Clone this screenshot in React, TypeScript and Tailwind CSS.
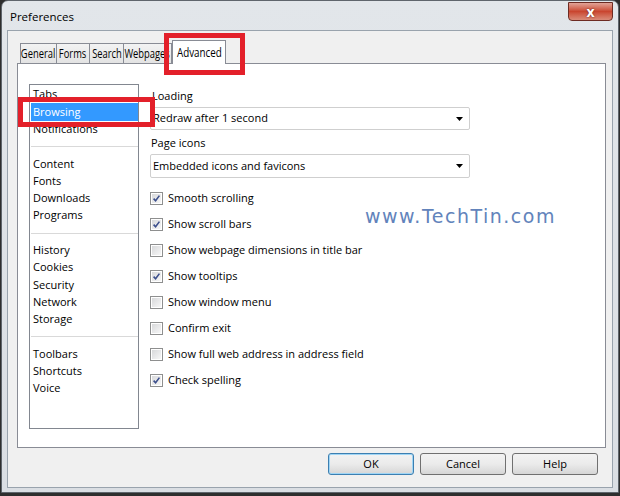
import React from "react";

const groups = [
  ["Tabs", "Browsing", "Notifications"],
  ["Content", "Fonts", "Downloads", "Programs"],
  ["History", "Cookies", "Security", "Network", "Storage"],
  ["Toolbars", "Shortcuts", "Voice"],
];

const options: [string, boolean][] = [
  ["Smooth scrolling", true],
  ["Show scroll bars", true],
  ["Show webpage dimensions in title bar", false],
  ["Show tooltips", true],
  ["Show window menu", false],
  ["Confirm exit", false],
  ["Show full web address in address field", false],
  ["Check spelling", true],
];

// tab label + width in px
const tabs: [string, string][] = [
  ["General", "w-[37px]"],
  ["Forms", "w-[34px]"],
  ["Search", "w-[35px]"],
  ["Webpages", "w-[49px]"],
];

function Checkbox({ checked }: { checked: boolean }) {
  return (
    <div className="w-[13px] h-[13px] border border-[#8e8f8f] bg-white p-[1px] shrink-0">
      <div className="w-full h-full bg-gradient-to-br from-[#d8d9db] to-[#f7f7f7] relative">
        {checked && (
          <svg viewBox="0 0 9 9" className="absolute inset-0 w-[9px] h-[9px]">
            <path d="M1.6 4.6 L3.6 6.8 L7.4 1.6" fill="none" stroke="#3c4f8c" strokeWidth="1.6" />
          </svg>
        )}
      </div>
    </div>
  );
}

function Select({ value, h }: { value: string; h: string }) {
  return (
    <div className={`w-[320px] ${h} border border-[#cfcfcf] rounded-[2px] bg-white flex items-center pl-[2px] pr-[6px]`}>
      <span className="flex-1">{value}</span>
      <svg viewBox="0 0 7 4" className="w-[7px] h-[4px]">
        <path d="M0 0 H7 L3.5 4 Z" fill="#000" />
      </svg>
    </div>
  );
}

export default function App() {
  return (
    <div className="w-[620px] h-[496px] bg-[#2e2e2e] relative overflow-hidden font-['Open_Sans',sans-serif] text-[11px] text-black">
      <div className="mx-[1px] h-[493px] rounded-t-[7px] border border-[#5f656c] bg-gradient-to-b from-[#e2e6ea] to-[#dadee3] flex flex-col">
        {/* title bar */}
        <div className="h-[29px] flex items-start justify-between pl-[8px] pr-[5px]">
          <span className="mt-[7px] text-[11.5px]">Preferences</span>
          <div className="w-[45px] h-[19px] mt-[1px] rounded-b-[4px] border border-[#6d2b22] bg-gradient-to-b from-[#e0a397] via-[#c9452f] to-[#d98b79] flex items-center justify-center">
            <span className="text-white font-bold text-[14px] leading-none [text-shadow:0_0_2px_#5a1a10]">x</span>
          </div>
        </div>

        {/* client */}
        <div className="mx-[5px] h-[458px] border border-[#99a3ad] bg-[#f0f0f0] pt-[9px] pl-[9px] pr-[6px]">
          <div className="h-[23px] flex items-end pl-[3px]">
            {tabs.map(([t, w]) => (
              <div
                key={t}
                className={`${w} h-[20px] -mr-px border border-b-0 border-[#898c95] bg-gradient-to-b from-[#f3f3f3] to-[#e3e3e3] flex items-center justify-center overflow-hidden`}
              >
                <span className="inline-block scale-x-[0.78] text-[12px] whitespace-nowrap">{t}</span>
              </div>
            ))}
            <div className="w-[54px] h-[24px] -mb-px ml-[1px] relative z-10 border border-b-0 border-[#898c95] bg-white flex items-center justify-center">
              <span className="inline-block scale-x-[0.82] text-[12px] whitespace-nowrap">Advanced</span>
            </div>
          </div>

          <div className="h-[385px] border border-[#898c95] bg-white flex pl-[11px] pt-[20px]">
            {/* category list */}
            <div className="w-[110px] h-[345px] border border-[#828790] pl-[1px] pr-0 pt-[1px]">
              {groups.map((g, gi) => (
                <div key={gi}>
                  {gi > 0 && (
                    <div className="h-[17.3px] flex items-center">
                      <div className="w-full h-px bg-[#d9d9d9]" />
                    </div>
                  )}
                  {g.map((item) => (
                    <div
                      key={item}
                      className={`h-[17.3px] pl-[2px] flex items-center ${
                        item === "Browsing" ? "bg-[#3399ff] text-white" : ""
                      }`}
                    >
                      {item}
                    </div>
                  ))}
                </div>
              ))}
            </div>

            {/* options */}
            <div className="ml-[11px] pt-[4px]">
              <div className="h-[17px] flex items-center pl-[2px]">Loading</div>
              <div className="mt-[2px]">
                <Select value="Redraw after 1 second" h="h-[23px]" />
              </div>
              <div className="mt-[5px] h-[17px] flex items-center pl-[1px]">Page icons</div>
              <div className="mt-[2px]">
                <Select value="Embedded icons and favicons" h="h-[24px]" />
              </div>
              <div className="mt-[7px]">
                {options.map(([label, on]) => (
                  <div key={label} className="h-[26px] flex items-center gap-[5px]">
                    <Checkbox checked={on} />
                    <span>{label}</span>
                  </div>
                ))}
              </div>
            </div>
          </div>

          {/* buttons */}
          <div className="mt-[5px] flex justify-end gap-[6px] pr-[8px]">
            {["OK", "Cancel", "Help"].map((b) => (
              <div
                key={b}
                className={`w-[86px] h-[22px] rounded-[3px] border flex items-center justify-center bg-gradient-to-b from-[#f2f2f2] via-[#ebebeb] to-[#d6d6d6] ${
                  b === "OK" ? "border-[#3c7fb1] shadow-[inset_0_0_0_1px_#9fd5f5]" : "border-[#707070]"
                }`}
              >
                {b}
              </div>
            ))}
          </div>
        </div>
      </div>

      {/* watermark */}
      <div className="absolute left-[365px] top-[202px] text-[19px] text-[#6283bb] font-['DejaVu_Sans',sans-serif] tracking-[1.5px]">
        www.TechTin.com
      </div>

      {/* highlight boxes */}
      <div className="absolute left-[164px] top-[33px] w-[81px] h-[42px] border-[5px] border-[#e3202a]" />
      <div className="absolute left-[18px] top-[97px] w-[137px] h-[30px] border-[5px] border-[#e3202a]" />
    </div>
  );
}
